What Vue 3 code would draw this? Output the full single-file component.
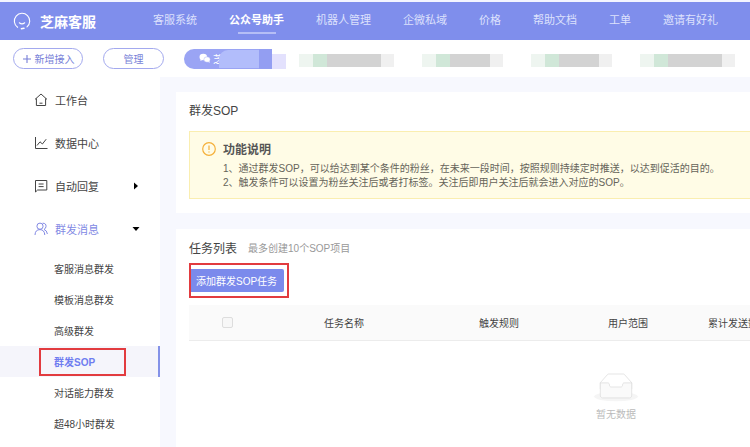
<script setup>
const nav = ['客服系统', '公众号助手', '机器人管理', '企微私域', '价格', '帮助文档', '工单', '邀请有好礼']
const activeNav = '公众号助手'
const menu = [
  { label: '工作台', icon: 'home' },
  { label: '数据中心', icon: 'chart' },
  { label: '自动回复', icon: 'reply', arrow: 'right' },
  { label: '群发消息', icon: 'users', arrow: 'down', active: true },
]
const subMenu = ['客服消息群发', '模板消息群发', '高级群发', '群发SOP', '对话能力群发', '超48小时群发']
const activeSub = '群发SOP'
const accounts = ['long', 'short', 'short', 'long']
</script>

<template>
  <div class="page">
    <header class="topbar">
      <a class="brand" href="#">
        <svg class="logo" viewBox="0 0 18 18" fill="none" stroke="#fff" stroke-linecap="round">
          <path d="M4.600 15.300A7.700 7.700 0 1 1 14 14.900" stroke-width="1.100" />
          <path d="M6.300 10.800Q9 13 11.700 10.800" stroke-width="1.100" />
          <path d="M8.400 16.700L11 16.300" stroke-width="1.500" />
        </svg>
        <span>芝麻客服</span>
      </a>
      <nav class="nav">
        <a v-for="n in nav" :key="n" href="#" :class="{ on: n === activeNav }">{{ n }}</a>
      </nav>
    </header>

    <div class="accounts">
      <button class="pill add" type="button">
        <svg viewBox="0 0 10 10" stroke="currentColor" stroke-width="1.1"><path d="M5 1V9M1 5H9" /></svg>新增接入
      </button>
      <button class="pill manage" type="button">管理</button>
      <button class="current" type="button" aria-label="当前公众号">
        <svg viewBox="0 0 14 12" fill="#fff">
          <ellipse cx="5" cy="4.2" rx="4.4" ry="3.7" />
          <path d="M2 6.5L1.6 9L4.4 7.6Z" />
          <ellipse cx="9.4" cy="7.2" rx="3.7" ry="3.2" stroke="#9aa4f2" stroke-width=".5" />
          <path d="M10.5 9.8L12.4 11.2L12 8.8Z" />
        </svg>
        <span class="name">芝</span>
        <span class="mask"></span>
      </button>
      <div class="others">
        <span v-for="(a, i) in accounts" :key="i" class="masked" :class="a"><i></i><i></i><i></i><i></i></span>
      </div>
    </div>

    <div class="body">
      <aside class="side">
        <ul class="menu">
          <li v-for="m in menu" :key="m.label">
            <a href="#" class="item" :class="{ active: m.active }">
              <svg class="ico" viewBox="0 0 14 14" fill="none" stroke="currentColor" stroke-width="1">
                <template v-if="m.icon === 'home'">
                  <path d="M1 6.4L7 1L13 6.4M2.4 5.4V12.5H11.6V5.4M5.5 10.2H8.5" />
                </template>
                <template v-else-if="m.icon === 'chart'">
                  <path d="M1.500 1V12.500H13.500M3 9.500L6 5.800L8.400 8L12.200 3.200" />
                </template>
                <template v-else-if="m.icon === 'reply'">
                  <path d="M1.500 13V1.500H12.800V11H3.600L1.500 13ZM4.600 5H9.600M4.600 7.600H9.600" />
                </template>
                <template v-else>
                  <circle cx="6" cy="4.2" r="3.1" />
                  <path d="M1 13Q1.200 7.600 6 7.600Q10.400 7.600 10.800 13M8.600 1.200Q12.400 1.200 12 4.600Q11.800 6.600 10 7.400Q13 8.400 13.400 12" />
                </template>
              </svg>
              <span>{{ m.label }}</span>
              <svg v-if="m.arrow" class="arrow" viewBox="0 0 8 8" fill="#000">
                <path v-if="m.arrow === 'right'" d="M2 0.500L6 4L2 7.500Z" />
                <path v-else d="M0.500 2L7.500 2L4 6Z" />
              </svg>
            </a>
          </li>
        </ul>
        <ul class="sub">
          <li v-for="s in subMenu" :key="s">
            <a href="#" :class="{ active: s === activeSub }">{{ s }}<span v-if="s === activeSub" class="mark"></span></a>
          </li>
        </ul>
      </aside>

      <main class="main">
        <section class="card intro">
          <h1>群发SOP</h1>
          <div class="notice">
            <svg viewBox="0 0 14 14" fill="none" stroke="#f5b03a">
              <circle cx="7" cy="7" r="6.3" stroke-width="1.2" />
              <path d="M7 3.600V8M7 9.400V10.600" stroke-width="1.200" />
            </svg>
            <div>
              <h2>功能说明</h2>
              <p>1、通过群发SOP，可以给达到某个条件的粉丝，在未来一段时间，按照规则持续定时推送，以达到促活的目的。</p>
              <p>2、触发条件可以设置为粉丝关注后或者打标签。关注后即用户关注后就会进入对应的SOP。</p>
            </div>
          </div>
        </section>

        <section class="card tasks">
          <div class="head">
            <h2>任务列表</h2>
            <small>最多创建10个SOP项目</small>
          </div>
          <div class="action">
            <button class="primary" type="button">添加群发SOP任务</button>
            <span class="mark"></span>
          </div>
          <table>
            <thead>
              <tr>
                <th class="c-check"><input type="checkbox" aria-label="全选" /></th>
                <th class="c-name">任务名称</th>
                <th class="c-rule">触发规则</th>
                <th class="c-range">用户范围</th>
                <th class="c-total">累计发送数量</th>
                <th></th>
              </tr>
            </thead>
            <tbody>
              <tr>
                <td colspan="6">
                  <svg class="empty" viewBox="0 0 64 41">
                    <ellipse cx="32" cy="33" rx="32" ry="7" fill="#f5f5f5" />
                    <g stroke="#d9d9d9" fill="#fff">
                      <path d="M55 12.8L44.9 1.3C44.3.5 43.5 0 42.7 0H21.3c-.8 0-1.6.5-2.2 1.3L9 12.8V22h46z" />
                      <path d="M41.6 16c0-1.7 1-3 2.2-3H55v18.1c0 2.2-1.3 3.9-3 3.9H12c-1.7 0-3-1.7-3-3.9V13h11.2c1.2 0 2.2 1.3 2.2 2.9 0 1.7 1 3.1 2.2 3.1h14.8c1.2 0 2.2-1.4 2.2-3z" fill="#fafafa" />
                    </g>
                  </svg>
                  <div class="empty-text">暂无数据</div>
                </td>
              </tr>
            </tbody>
          </table>
        </section>
      </main>
    </div>
  </div>
</template>

<style>
body { background: #f7f8fe; }
</style>

<style scoped>
* { box-sizing: border-box; }
.page {
  min-height: 100vh;
  display: flex;
  flex-direction: column;
  overflow: hidden;
  font-family: "Liberation Sans", "Noto Sans CJK SC", sans-serif;
  font-size: 10px;
  color: #444;
  border-top: 2px solid #f3f5ff;
}
a { color: inherit; text-decoration: none; }
ul { list-style: none; margin: 0; padding: 0; }
h1, h2, p { margin: 0; font-weight: 400; }
button { font: inherit; padding: 0; cursor: pointer; }

.topbar {
  display: flex;
  align-items: center;
  height: 38px;
  background: #7f8eec;
  color: #fff;
}
.brand {
  display: flex;
  align-items: center;
  gap: 9px;
  width: 153px;
  flex: none;
  padding-left: 13px;
  font-size: 14px;
  font-weight: 700;
}
.logo { width: 18px; height: 18px; }
.nav { display: flex; gap: 32px; font-size: 11px; white-space: nowrap; }
.nav a { line-height: 24px; color: #dde1fc; border-bottom: 2px solid transparent; }
.nav .on {
  color: #fff;
  font-weight: 700;
  background: linear-gradient(#b5bef6, #b5bef6) center bottom / 38px 2px no-repeat border-box;
}

.accounts {
  display: flex;
  align-items: center;
  height: 37px;
  padding: 0 15px 0 13px;
  background: #fff;
}
.pill {
  display: flex;
  align-items: center;
  justify-content: center;
  height: 21px;
  border: 1px solid #a3a9ee;
  border-radius: 11px;
  background: #fff;
  color: #777fd8;
}
.add { width: 70px; gap: 3px; margin-right: 20px; }
.add svg { width: 10px; height: 10px; }
.manage { width: 61px; margin-right: 20px; }
.current {
  display: flex;
  align-items: center;
  width: 102px;
  height: 20px;
  padding-left: 15px;
  border: 0;
  border-radius: 10px 0 0 10px;
  background:
    linear-gradient(#e3e1fd, #e3e1fd) right bottom / 14px 15px no-repeat,
    linear-gradient(90deg, #9aa4f4 75px, #939ef2 75px 88px, transparent 88px);
  color: #fff;
}
.current svg { width: 12px; height: 11px; }
.name { width: 6px; margin-left: 2px; }
.mask { position: relative; width: 40px; height: 18px; border-radius: 9px 0 0 0; background: #b2bdfb; }
.others { flex: 1; display: flex; justify-content: space-between; padding: 3px 0 0 13px; }
.masked { display: flex; height: 13px; }
.masked i { background: #d3d3d3; }
.masked i:nth-child(1) { width: 14px; background: #eef5f0; }
.masked i:nth-child(2) { width: 14px; background: #d0e7d8; }
.masked i:nth-child(3) { width: 54px; }
.masked i:nth-child(4) { width: 13px; background: #f0f0f0; }
.short i:nth-child(3) { width: 40px; }

.body { flex: 1; display: flex; }
.side { width: 160px; flex: none; background: #fff; }
.menu { padding: 1px 0 3px; }
.item {
  display: flex;
  align-items: center;
  height: 43px;
  padding: 0 20px 0 34px;
  gap: 7px;
  font-size: 11px;
}
.ico { width: 14px; height: 14px; }
.arrow { width: 8px; height: 8px; margin-left: auto; }
.item.active { color: #8289e4; }
.sub a {
  position: relative;
  display: flex;
  align-items: center;
  height: 31px;
  padding-left: 54px;
}
.sub .active {
  color: #6f7df0;
  font-weight: 700;
  background: #f5f5fb;
  border-right: 2px solid #8492e8;
}
.mark { position: absolute; border: 2px solid #e23b3f; pointer-events: none; }
.sub .mark { inset: 2px 32px 1px 39px; }

.main {
  flex: 1;
  min-width: 0;
  display: flex;
  flex-direction: column;
  gap: 16px;
  padding: 15px 0 0 16px;
}
.card { background: #fff; padding-left: 13px; overflow: hidden; }
.intro { padding-top: 10px; padding-bottom: 14px; }
h1 { font-size: 12px; line-height: 18px; }
.notice {
  display: flex;
  gap: 7px;
  margin-top: 11px;
  padding: 9px 13px 8px 12px;
  border: 1px solid #faeeb0;
  border-right: 0;
  background: #fffce6;
}
.notice svg { width: 14px; height: 14px; flex: none; margin-top: 1px; }
.notice h2 { font-size: 12px; line-height: 18px; font-weight: 700; color: #555; margin-bottom: 3px; }
.notice p { line-height: 14px; color: #66645a; white-space: nowrap; }

.tasks { flex: 1; }
.head { display: flex; align-items: center; gap: 11px; height: 36px; }
.head h2 { font-size: 12px; }
.head small { font-size: 10px; color: #999; }
.action { position: relative; width: max-content; margin-top: 4px; }
.primary {
  display: block;
  height: 23px;
  padding: 0 7px;
  border: 0;
  border-radius: 2px;
  background: #7b8aec;
  color: #fff;
}
.action .mark { inset: -6px -5px -6px 0; }
table {
  width: 854px;
  margin-top: 13px;
  table-layout: fixed;
  border-collapse: collapse;
}
th { height: 35px; padding: 0; font-weight: 400; background: #fafafa; border-bottom: 1px solid #ececec; }
.c-check { width: 77px; }
.c-name { width: 156px; }
.c-rule { width: 154px; }
.c-range { width: 104px; }
.c-total { width: 116px; }
input {
  appearance: none;
  display: block;
  width: 11px;
  height: 11px;
  margin: 0 auto;
  border: 1px solid #ddd;
  border-radius: 2px;
  background: #f7f7f7;
}
td { padding: 33px 0 0; text-align: center; }
.empty { display: block; width: 44px; height: 28px; margin: 0 auto 5px; overflow: visible; }
.empty-text { line-height: 15px; color: #bbb; }
</style>
